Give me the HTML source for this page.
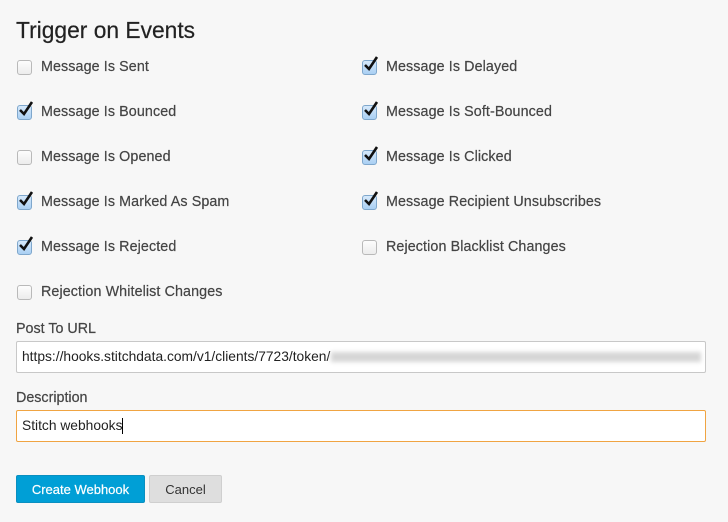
<!DOCTYPE html>
<html><head><style>
body{margin:0;background:#f7f7f7;font-family:"Liberation Sans",Arial,sans-serif;color:#444;width:728px;height:522px;overflow:hidden;position:relative}
h1{position:absolute;left:16px;top:17px;margin:0;font-size:22.8px;font-weight:normal;color:#222;-webkit-text-stroke:0.2px #222}
.cb{position:absolute;width:14px;height:14px}
.cb .box{position:absolute;left:0;top:0;width:13px;height:13px;border:1px solid #b9b9b9;border-radius:3px;background:linear-gradient(#fdfdfd,#ececec)}
.cb.on .box{background:linear-gradient(#d6e9fb,#a9cff3);border-color:#7fa7cc}
.cb svg{position:absolute;left:1px;top:-4px}
.lbl{position:absolute;font-size:14.3px;color:#444;letter-spacing:0.1px;-webkit-text-stroke:0.2px #444}
.fl{position:absolute;left:16px;font-size:14.3px;color:#444;-webkit-text-stroke:0.2px #444}
.inp{position:absolute;left:16px;width:690px;height:32px;line-height:30px;background:#fff;border:1px solid #c8c8c8;border-radius:2px;box-sizing:border-box;font-size:13.8px;color:#222;padding:0 0 0 5px;white-space:nowrap;overflow:hidden}
.blur{display:inline-block;width:370px;height:10px;vertical-align:middle;background:#d6d6d6;filter:blur(2px);margin-left:1px}
.btn{position:absolute;top:475px;height:28px;font-size:13px;line-height:28px;text-align:center;box-sizing:border-box;border-radius:2px}
</style></head><body>
<h1>Trigger on Events</h1>

<div class="cb" style="left:17px;top:60px"><div class="box"></div></div>
<div class="lbl" style="left:41px;top:59px">Message Is Sent</div>
<div class="cb on" style="left:362px;top:60px"><div class="box"></div><svg width="16" height="16" viewBox="0 0 16 16"><path d="M2 9 L6 13 L14 1" fill="none" stroke="#111" stroke-width="2.6"/></svg></div>
<div class="lbl" style="left:386px;top:59px">Message Is Delayed</div>

<div class="cb on" style="left:17px;top:105px"><div class="box"></div><svg width="16" height="16" viewBox="0 0 16 16"><path d="M2 9 L6 13 L14 1" fill="none" stroke="#111" stroke-width="2.6"/></svg></div>
<div class="lbl" style="left:41px;top:104px">Message Is Bounced</div>
<div class="cb on" style="left:362px;top:105px"><div class="box"></div><svg width="16" height="16" viewBox="0 0 16 16"><path d="M2 9 L6 13 L14 1" fill="none" stroke="#111" stroke-width="2.6"/></svg></div>
<div class="lbl" style="left:386px;top:104px">Message Is Soft-Bounced</div>

<div class="cb" style="left:17px;top:150px"><div class="box"></div></div>
<div class="lbl" style="left:41px;top:149px">Message Is Opened</div>
<div class="cb on" style="left:362px;top:150px"><div class="box"></div><svg width="16" height="16" viewBox="0 0 16 16"><path d="M2 9 L6 13 L14 1" fill="none" stroke="#111" stroke-width="2.6"/></svg></div>
<div class="lbl" style="left:386px;top:149px">Message Is Clicked</div>

<div class="cb on" style="left:17px;top:195px"><div class="box"></div><svg width="16" height="16" viewBox="0 0 16 16"><path d="M2 9 L6 13 L14 1" fill="none" stroke="#111" stroke-width="2.6"/></svg></div>
<div class="lbl" style="left:41px;top:194px">Message Is Marked As Spam</div>
<div class="cb on" style="left:362px;top:195px"><div class="box"></div><svg width="16" height="16" viewBox="0 0 16 16"><path d="M2 9 L6 13 L14 1" fill="none" stroke="#111" stroke-width="2.6"/></svg></div>
<div class="lbl" style="left:386px;top:194px">Message Recipient Unsubscribes</div>

<div class="cb on" style="left:17px;top:240px"><div class="box"></div><svg width="16" height="16" viewBox="0 0 16 16"><path d="M2 9 L6 13 L14 1" fill="none" stroke="#111" stroke-width="2.6"/></svg></div>
<div class="lbl" style="left:41px;top:239px">Message Is Rejected</div>
<div class="cb" style="left:362px;top:240px"><div class="box"></div></div>
<div class="lbl" style="left:386px;top:239px">Rejection Blacklist Changes</div>

<div class="cb" style="left:17px;top:285px"><div class="box"></div></div>
<div class="lbl" style="left:41px;top:284px">Rejection Whitelist Changes</div>

<div class="fl" style="top:321px">Post To URL</div>
<div class="inp" style="top:341px">https://hooks.stitchdata.com/v1/clients/7723/token/<span class="blur"></span></div>

<div class="fl" style="top:390px">Description</div>
<div class="inp" style="top:410px;border-color:#f0a442">Stitch webhooks<span style="display:inline-block;width:1px;height:16px;background:#000;vertical-align:middle"></span></div>

<div class="btn" style="left:16px;width:129px;background:#009fd6;color:#fff;border:1px solid #0a8fc0;-webkit-text-stroke:0.2px #fff">Create Webhook</div>
<div class="btn" style="left:149px;width:73px;background:#dedede;color:#333;border:1px solid #cfcfcf">Cancel</div>
</body></html>
